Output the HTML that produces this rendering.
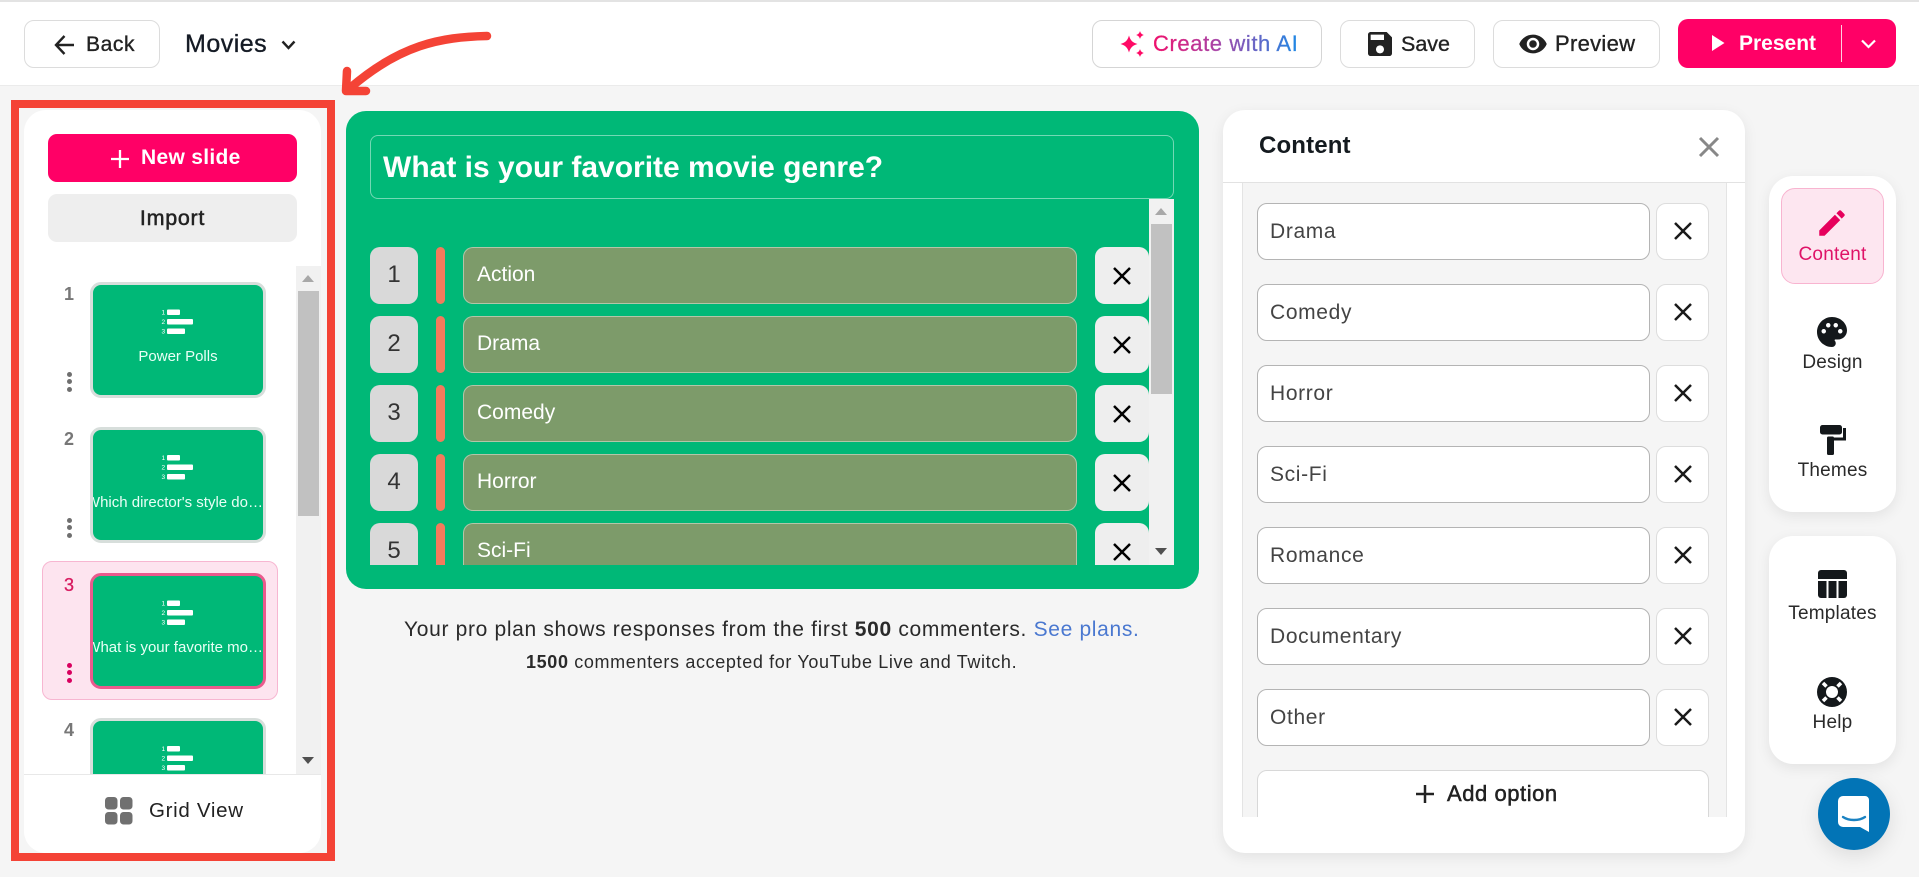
<!DOCTYPE html>
<html lang="en">
<head>
<meta charset="utf-8">
<title>Movies</title>
<style>
*{box-sizing:border-box;margin:0;padding:0}
html,body{width:1919px;height:877px;overflow:hidden;background:#f5f5f5;font-family:"Liberation Sans",Arial,sans-serif;color:#1f1f1f}
.a{position:absolute}
.t{position:absolute;white-space:nowrap}
.m{-webkit-text-stroke:.35px currentColor}
.btn{position:absolute;background:#fff;border:1px solid #dcdcdc;border-radius:10px}
.sb{position:absolute;background:#f1f1f1}
.sb i{position:absolute;left:2px;width:21px;background:#c1c1c1}
.th{position:absolute;left:90px;width:176px;height:116px;border:3px solid #d7dedb;border-radius:11px;background:#00b877;overflow:hidden}
.th svg{position:absolute;left:0;top:0}
.th span{position:absolute;left:0;right:0;top:61px;height:22px;line-height:22px;font-size:15px;color:#e9fff6;white-space:nowrap;text-align:center}
.th span.r{left:auto;right:0;text-align:right}
.num{position:absolute;left:46px;width:46px;text-align:center;font-size:18px;font-weight:bold;color:#777;line-height:20px}
.dots{position:absolute;left:66px;width:6px;height:20px}
.dots b{display:block;width:5px;height:5px;border-radius:50%;background:#6f6f6f;margin:0 0 2.3px .5px}
.row{position:absolute;left:370px;width:779px;height:57px}
.row .n{position:absolute;left:0;top:0;width:48px;height:57px;background:#d9d9d9;border-radius:10px;text-align:center;line-height:56px;font-size:24px;color:#333}
.row .o{position:absolute;left:66px;top:0;width:9px;height:57px;background:#f47a5c;border-radius:5px}
.row .p{position:absolute;left:93px;top:0;width:614px;height:57px;background:#7d9b6a;border:1px solid rgba(255,255,255,.42);border-radius:10px;color:#fff;font-size:21px;line-height:54px;padding-left:13px}
.row .x{position:absolute;left:725px;top:0;width:54px;height:57px;background:#eee;border-radius:10px}
.row .x svg{position:absolute;left:18px;top:19.500px}
.in{position:absolute;left:1257px;width:393px;height:57px;background:#fff;border:1px solid #b4b4b4;border-radius:10px;font-size:21px;color:#444;line-height:56px;padding-left:12px;letter-spacing:.65px}
.ix{position:absolute;left:1656px;width:53px;height:57px;background:#fff;border:1px solid #ddd;border-radius:10px}
.ix svg{position:absolute;left:17px;top:18px}
.rl{position:absolute;left:1769px;width:127px;text-align:center;font-size:19px;letter-spacing:.2px;line-height:22px;color:#2a2a2a}
.card{position:absolute;left:1769px;width:127px;background:#fff;border-radius:24px;box-shadow:0 4px 14px rgba(0,0,0,.08)}
</style>
</head>
<body>
<div class="a" style="left:0;top:0;width:1919px;height:86px;background:#fff;border-bottom:1px solid #ebebeb"></div>
<div class="a" style="left:0;top:0;width:1919px;height:2px;background:#e3e3e3"></div>

<!-- top bar left -->
<div class="btn" style="left:24px;top:20px;width:136px;height:48px"></div>
<svg class="a" style="left:54px;top:34px" width="21" height="22" viewBox="0 0 21 22" fill="none" stroke="#222" stroke-width="2.4"><path d="M20 11H2M10.500 2 2 11l8.500 9"/></svg>
<div class="t m" style="left:86px;top:33px;font-size:21px;line-height:24px;color:#222;letter-spacing:.6px">Back</div>
<div class="t m" style="left:185px;top:30px;font-size:25px;line-height:28px;color:#141a24;letter-spacing:.5px">Movies</div>
<svg class="a" style="left:281px;top:40px" width="15" height="10" viewBox="0 0 15 10" fill="none" stroke="#222" stroke-width="2.400"><path d="M1.500 1.500 7.500 8l6-6.500"/></svg>

<!-- top bar right -->
<div class="btn" style="left:1092px;top:20px;width:230px;height:48px;border-color:#d5d5d5"></div>
<svg class="a" style="left:1119px;top:30px" width="27" height="28" viewBox="0 0 27 28" fill="#ff0a66"><path d="M10 5.500C11.500 10.500 13.500 12.500 18.500 14 13.500 15.500 11.500 17.500 10 22.500 8.500 17.500 6.500 15.500 1.500 14 6.500 12.500 8.500 10.500 10 5.500z"/><path d="M21 1c.8 2.400 1.600 3.200 4 4-2.400.8-3.200 1.600-4 4-.8-2.400-1.600-3.200-4-4 2.400-.8 3.200-1.600 4-4z"/><path d="M21 19c.8 2.400 1.600 3.200 4 4-2.400.8-3.200 1.600-4 4-.8-2.400-1.600-3.200-4-4 2.400-.8 3.200-1.600 4-4z"/></svg>
<div class="t" style="left:1153px;top:32px;font-size:22px;letter-spacing:.6px;line-height:24px;font-weight:normal;background:linear-gradient(90deg,#f0106c,#a645a8 45%,#1e88e5);-webkit-background-clip:text;background-clip:text;color:transparent;-webkit-text-stroke:.3px transparent">Create with AI</div>

<div class="btn" style="left:1340px;top:20px;width:135px;height:48px"></div>
<svg class="a" style="left:1364px;top:28px" width="32" height="32" viewBox="0 0 24 24" fill="#222"><path d="M17 3H5c-1.110 0-2 .9-2 2v14c0 1.100.89 2 2 2h14c1.100 0 2-.9 2-2V7l-4-4zm-5 16c-1.660 0-3-1.340-3-3s1.340-3 3-3 3 1.340 3 3-1.340 3-3 3zm3-10H5V5h10v4z"/></svg>
<div class="t m" style="left:1401px;top:32px;font-size:21.500px;line-height:24px;color:#222">Save</div>

<div class="btn" style="left:1493px;top:20px;width:167px;height:48px"></div>
<svg class="a" style="left:1518px;top:29px" width="30" height="30" viewBox="0 0 24 24" fill="#222"><path d="M12 4.500C7 4.500 2.730 7.610 1 12c1.730 4.390 6 7.500 11 7.500s9.270-3.110 11-7.500c-1.730-4.390-6-7.500-11-7.500zM12 17c-2.760 0-5-2.240-5-5s2.240-5 5-5 5 2.240 5 5-2.240 5-5 5zm0-8c-1.660 0-3 1.340-3 3s1.340 3 3 3 3-1.340 3-3-1.340-3-3-3z"/></svg>
<div class="t m" style="left:1555px;top:32px;font-size:22px;letter-spacing:.3px;line-height:24px;color:#222">Preview</div>

<div class="a" style="left:1678px;top:19px;width:218px;height:49px;background:#ff0066;border-radius:10px"></div>
<div class="a" style="left:1841px;top:25px;width:1px;height:37px;background:#ffd0e0"></div>
<svg class="a" style="left:1712px;top:35px" width="13" height="16" viewBox="0 0 13 16" fill="#fff"><path d="M0 0l12.500 8L0 16z"/></svg>
<div class="t" style="left:1739px;top:32px;font-size:21px;line-height:24px;color:#fff;font-weight:bold">Present</div>
<svg class="a" style="left:1861px;top:39px" width="15" height="10" viewBox="0 0 15 10" fill="none" stroke="#fff" stroke-width="2.200"><path d="M1 1.500 7.500 8 14 1.500"/></svg>

<!-- left sidebar -->
<div class="a" style="left:24px;top:110px;width:297px;height:743px;background:#fff;border-radius:22px;overflow:hidden">
  <div class="a" style="left:24px;top:24px;width:249px;height:48px;background:#ff0066;border-radius:9px"></div>
  <svg class="a" style="left:87px;top:40px" width="18" height="18" viewBox="0 0 18 18" stroke="#fff" stroke-width="2.300"><path d="M9 0v18M0 9h18"/></svg>
  <div class="t" style="left:117px;top:36px;font-size:21px;letter-spacing:.3px;line-height:24px;color:#fff;font-weight:bold">New slide</div>
  <div class="a" style="left:24px;top:84px;width:249px;height:48px;background:#eee;border-radius:9px"></div>
  <div class="t m" style="left:24px;width:249px;text-align:center;top:96px;font-size:21.500px;letter-spacing:.7px;line-height:24px;color:#222;-webkit-text-stroke:.5px #222">Import</div>
</div>

<div class="sb" style="left:296px;top:266px;width:25px;height:508px"><i style="top:25px;height:225px"></i></div>
<svg class="a" style="left:302px;top:275px" width="12" height="8" viewBox="0 0 12 8" fill="#a8a8a8"><path d="M6 0l6 7H0z"/></svg>
<svg class="a" style="left:302px;top:757px" width="12" height="8" viewBox="0 0 12 8" fill="#505050"><path d="M0 0h12L6 7z"/></svg>

<div class="a" style="left:42px;top:561px;width:236px;height:139px;background:#fde4ef;border:1px solid #f7b6d1;border-radius:10px"></div>

<div class="num" style="top:284px">1</div>
<div class="dots" style="top:372px"><b></b><b></b><b></b></div>
<div class="th" style="top:282px">
  <svg width="170" height="60" viewBox="0 0 170 60" fill="#fff"><text x="68.500" y="29.500" font-size="6.500" font-family="Liberation Sans">1</text><text x="68.500" y="39" font-size="6.500" font-family="Liberation Sans">2</text><text x="68.500" y="48.500" font-size="6.500" font-family="Liberation Sans">3</text><rect x="74" y="24.500" width="13" height="5.500" rx="1"/><rect x="74" y="34" width="26" height="5.500" rx="1"/><rect x="74" y="43.500" width="18" height="5.500" rx="1"/></svg>
  <span>Power Polls</span>
</div>

<div class="num" style="top:429px">2</div>
<div class="dots" style="top:518px"><b></b><b></b><b></b></div>
<div class="th" style="top:427px">
  <svg width="170" height="60" viewBox="0 0 170 60" fill="#fff"><text x="68.500" y="30" font-size="6.500" font-family="Liberation Sans">1</text><text x="68.500" y="39.500" font-size="6.500" font-family="Liberation Sans">2</text><text x="68.500" y="49" font-size="6.500" font-family="Liberation Sans">3</text><rect x="74" y="25" width="13" height="5.500" rx="1"/><rect x="74" y="34.500" width="26" height="5.500" rx="1"/><rect x="74" y="44" width="18" height="5.500" rx="1"/></svg>
  <span class="r" style="top:62px">Which director's style do…</span>
</div>

<div class="num" style="top:575px;color:#d81b60;font-weight:normal;-webkit-text-stroke:.3px #d81b60">3</div>
<div class="dots" style="top:663px"><b style="background:#d8005f"></b><b style="background:#d8005f"></b><b style="background:#d8005f"></b></div>
<div class="th" style="top:573px;border-color:#ea5a8d">
  <svg width="170" height="60" viewBox="0 0 170 60" fill="#fff"><text x="68.500" y="29.500" font-size="6.500" font-family="Liberation Sans">1</text><text x="68.500" y="39" font-size="6.500" font-family="Liberation Sans">2</text><text x="68.500" y="48.500" font-size="6.500" font-family="Liberation Sans">3</text><rect x="74" y="24.500" width="13" height="5.500" rx="1"/><rect x="74" y="34" width="26" height="5.500" rx="1"/><rect x="74" y="43.500" width="18" height="5.500" rx="1"/></svg>
  <span class="r">What is your favorite mo…</span>
</div>

<div class="num" style="top:720px">4</div>
<div class="th" style="top:718px">
  <svg width="170" height="60" viewBox="0 0 170 60" fill="#fff"><text x="68.500" y="30" font-size="6.500" font-family="Liberation Sans">1</text><text x="68.500" y="39.500" font-size="6.500" font-family="Liberation Sans">2</text><text x="68.500" y="49" font-size="6.500" font-family="Liberation Sans">3</text><rect x="74" y="25" width="13" height="5.500" rx="1"/><rect x="74" y="34.500" width="26" height="5.500" rx="1"/><rect x="74" y="44" width="18" height="5.500" rx="1"/></svg>
</div>

<div class="a" style="left:24px;top:774px;width:297px;height:79px;background:#fff;border-top:1px solid #e8e8e8;border-radius:0 0 22px 22px"></div>
<svg class="a" style="left:105px;top:797px" width="28" height="28" viewBox="0 0 28 28" fill="#707070"><rect x="0" y="0" width="12.500" height="12.500" rx="3.500"/><rect x="15" y="0" width="12.500" height="12.500" rx="3.500"/><rect x="0" y="15" width="12.500" height="12.500" rx="3.500"/><rect x="15" y="15" width="12.500" height="12.500" rx="3.500"/></svg>
<div class="t" style="left:149px;top:799px;font-size:20.500px;line-height:24px;color:#222;letter-spacing:.7px">Grid View</div>

<!-- red annotation -->
<div class="a" style="left:11px;top:100px;width:324px;height:761px;border:8px solid #f44336"></div>
<svg class="a" style="left:330px;top:20px" width="170" height="85" viewBox="330 20 170 85" fill="none" stroke="#f44336" stroke-width="8.500" stroke-linecap="round" stroke-linejoin="round"><path d="M487 36C440 37 400 45 350 88"/><path d="M347 71 346 91 366 91"/></svg>

<!-- green panel -->
<div class="a" style="left:346px;top:111px;width:853px;height:478px;background:#00b877;border-radius:20px"></div>
<div class="a" style="left:370px;top:135px;width:804px;height:64px;border:1px solid rgba(255,255,255,.45);border-radius:8px"></div>
<div class="t" style="left:383px;top:150px;font-size:30px;line-height:36px;font-weight:bold;color:#fff">What is your favorite movie genre?</div>

<div class="a" style="left:346px;top:199px;width:803px;height:366px;overflow:hidden">
  <div class="row" style="left:24px;top:48px"><div class="n">1</div><div class="o"></div><div class="p">Action</div><div class="x"><svg width="18" height="18" viewBox="0 0 18 18" stroke="#000" stroke-width="2.500"><path d="M1 1l16 16M17 1 1 17"/></svg></div></div>
  <div class="row" style="left:24px;top:117px"><div class="n">2</div><div class="o"></div><div class="p">Drama</div><div class="x"><svg width="18" height="18" viewBox="0 0 18 18" stroke="#000" stroke-width="2.500"><path d="M1 1l16 16M17 1 1 17"/></svg></div></div>
  <div class="row" style="left:24px;top:186px"><div class="n">3</div><div class="o"></div><div class="p">Comedy</div><div class="x"><svg width="18" height="18" viewBox="0 0 18 18" stroke="#000" stroke-width="2.500"><path d="M1 1l16 16M17 1 1 17"/></svg></div></div>
  <div class="row" style="left:24px;top:255px"><div class="n">4</div><div class="o"></div><div class="p">Horror</div><div class="x"><svg width="18" height="18" viewBox="0 0 18 18" stroke="#000" stroke-width="2.500"><path d="M1 1l16 16M17 1 1 17"/></svg></div></div>
  <div class="row" style="left:24px;top:324px"><div class="n">5</div><div class="o"></div><div class="p">Sci-Fi</div><div class="x"><svg width="18" height="18" viewBox="0 0 18 18" stroke="#000" stroke-width="2.500"><path d="M1 1l16 16M17 1 1 17"/></svg></div></div>
</div>

<div class="sb" style="left:1149px;top:199px;width:25px;height:366px"><i style="top:25px;height:170px"></i></div>
<svg class="a" style="left:1155px;top:208px" width="12" height="8" viewBox="0 0 12 8" fill="#a8a8a8"><path d="M6 0l6 7H0z"/></svg>
<svg class="a" style="left:1155px;top:548px" width="12" height="8" viewBox="0 0 12 8" fill="#505050"><path d="M0 0h12L6 7z"/></svg>

<div class="t" style="left:404px;top:617px;font-size:21px;line-height:26px;color:#2a2a2a;letter-spacing:.67px">Your pro plan shows responses from the first <b>500</b> commenters. <span style="color:#4a78d0">See plans.</span></div>
<div class="t" style="left:526px;top:652px;font-size:18px;line-height:20px;color:#2a2a2a;letter-spacing:.64px"><b>1500</b> commenters accepted for YouTube Live and Twitch.</div>

<!-- content panel -->
<div class="a" style="left:1223px;top:110px;width:522px;height:743px;background:#fff;border-radius:22px;box-shadow:0 4px 14px rgba(0,0,0,.08)"></div>
<div class="a" style="left:1223px;top:182px;width:522px;height:1px;background:#e2e2e2"></div>
<div class="t" style="left:1259px;top:132px;font-size:24px;letter-spacing:.15px;line-height:28px;font-weight:bold;color:#141a1f">Content</div>
<svg class="a" style="left:1698px;top:136px" width="22" height="22" viewBox="0 0 22 22" stroke="#888" stroke-width="3"><path d="M2 2l18 18M20 2 2 20"/></svg>
<div class="a" style="left:1242px;top:183px;width:485px;height:634px;background:#f5f5f5;border-left:1px solid #e4e4e4;border-right:1px solid #e4e4e4;overflow:hidden">
  <div class="a" style="left:14px;top:587px;width:452px;height:60px;background:#fff;border:1px solid #d8d8d8;border-radius:10px"></div>
</div>
<div class="in" style="top:203px">Drama</div><div class="ix" style="top:203px"><svg width="18" height="18" viewBox="0 0 18 18" stroke="#1a1a1a" stroke-width="2.500"><path d="M1 1l16 16M17 1 1 17"/></svg></div>
<div class="in" style="top:284px">Comedy</div><div class="ix" style="top:284px"><svg width="18" height="18" viewBox="0 0 18 18" stroke="#1a1a1a" stroke-width="2.500"><path d="M1 1l16 16M17 1 1 17"/></svg></div>
<div class="in" style="top:365px">Horror</div><div class="ix" style="top:365px"><svg width="18" height="18" viewBox="0 0 18 18" stroke="#1a1a1a" stroke-width="2.500"><path d="M1 1l16 16M17 1 1 17"/></svg></div>
<div class="in" style="top:446px">Sci-Fi</div><div class="ix" style="top:446px"><svg width="18" height="18" viewBox="0 0 18 18" stroke="#1a1a1a" stroke-width="2.500"><path d="M1 1l16 16M17 1 1 17"/></svg></div>
<div class="in" style="top:527px">Romance</div><div class="ix" style="top:527px"><svg width="18" height="18" viewBox="0 0 18 18" stroke="#1a1a1a" stroke-width="2.500"><path d="M1 1l16 16M17 1 1 17"/></svg></div>
<div class="in" style="top:608px">Documentary</div><div class="ix" style="top:608px"><svg width="18" height="18" viewBox="0 0 18 18" stroke="#1a1a1a" stroke-width="2.500"><path d="M1 1l16 16M17 1 1 17"/></svg></div>
<div class="in" style="top:689px">Other</div><div class="ix" style="top:689px"><svg width="18" height="18" viewBox="0 0 18 18" stroke="#1a1a1a" stroke-width="2.500"><path d="M1 1l16 16M17 1 1 17"/></svg></div>
<svg class="a" style="left:1416px;top:785px" width="18" height="18" viewBox="0 0 18 18" stroke="#222" stroke-width="2.500"><path d="M9 0v18M0 9h18"/></svg>
<div class="t m" style="left:1447px;top:782px;font-size:22px;line-height:24px;color:#222;letter-spacing:.55px;-webkit-text-stroke:.5px #222">Add option</div>

<!-- right rail -->
<div class="card" style="top:176px;height:336px"></div>
<div class="a" style="left:1781px;top:188px;width:103px;height:96px;background:#fde6f0;border:1px solid #f8b4d0;border-radius:14px"></div>
<svg class="a" style="left:1815px;top:206px" width="34" height="34" viewBox="0 0 24 24" fill="#e6005c"><path d="M3 17.250V21h3.750L17.810 9.940l-3.750-3.750L3 17.250zM20.710 7.040c.39-.39.39-1.020 0-1.410l-2.340-2.340c-.39-.39-1.020-.39-1.410 0l-1.830 1.830 3.750 3.750 1.830-1.830z"/></svg>
<div class="rl" style="top:244px;color:#df1267">Content</div>
<svg class="a" style="left:1814px;top:314px" width="36" height="36" viewBox="0 0 24 24" fill="#14181b" fill-rule="evenodd"><path d="M12 2C6.490 2 2 6.490 2 12s4.490 10 10 10c1.380 0 2.500-1.120 2.500-2.500 0-.61-.23-1.200-.64-1.670-.08-.1-.13-.21-.13-.33 0-.28.22-.5.5-.5H16c3.310 0 6-2.690 6-6 0-4.960-4.490-9-10-9zm-5.500 11c-.83 0-1.500-.67-1.500-1.500S5.670 10 6.500 10 8 10.670 8 11.500 7.330 13 6.500 13zm3-4C8.670 9 8 8.330 8 7.500S8.670 6 9.500 6s1.500.67 1.500 1.500S10.330 9 9.500 9zm5 0c-.83 0-1.500-.67-1.500-1.500S13.670 6 14.500 6s1.500.67 1.500 1.500S15.330 9 14.500 9zm3 4c-.83 0-1.500-.67-1.500-1.500s.67-1.500 1.500-1.500 1.500.67 1.500 1.500-.67 1.500-1.500 1.500z"/></svg>
<div class="rl" style="top:352px">Design</div>
<svg class="a" style="left:1820px;top:425px" width="26" height="30" viewBox="0 0 26 30" fill="#14181b"><rect x="0" y="0" width="22" height="9.500" rx="2.500"/><path d="M21 3h5v12.500H14v-3h9V3z"/><rect x="7" y="11.500" width="7" height="18.500" rx="1.500"/></svg>
<div class="rl" style="top:460px">Themes</div>

<div class="card" style="top:536px;height:228px"></div>
<svg class="a" style="left:1818px;top:570px" width="29" height="28" viewBox="0 0 29 28" fill="#14181b"><path d="M3 0h23a3 3 0 0 1 3 3v6H0V3a3 3 0 0 1 3-3z"/><path d="M0 11h8.500v17H3a3 3 0 0 1-3-3z"/><rect x="10.500" y="11" width="8" height="17"/><path d="M20.500 11H29v14a3 3 0 0 1-3 3h-5.500z"/></svg>
<div class="rl" style="top:603px">Templates</div>
<svg class="a" style="left:1817px;top:677px" width="30" height="30" viewBox="0 0 30 30"><circle cx="15" cy="15" r="15" fill="#14181b"/><circle cx="15" cy="15" r="6" fill="#fff"/><g stroke="#fff" stroke-width="3.500"><path d="M9.500 9.500l-3.500-3.500M20.500 9.500l3.500-3.500M9.500 20.500l-3.500 3.500M20.500 20.500l3.500 3.500"/></g></svg>
<div class="rl" style="top:712px">Help</div>

<div class="a" style="left:1818px;top:778px;width:72px;height:72px;border-radius:50%;background:#0274b6;box-shadow:0 6px 20px rgba(0,0,0,.1)"></div>
<svg class="a" style="left:1838px;top:796px" width="32" height="36" viewBox="0 0 32 36"><path d="M5 0h22a4 4 0 0 1 4 4v32l-9-5H5a5 5 0 0 1-5-5V5a5 5 0 0 1 5-5z" fill="#fff"/><path d="M5 21c6 4 16 4 22 0" fill="none" stroke="#1a82c2" stroke-width="2.400" stroke-linecap="round"/></svg>
</body>
</html>
